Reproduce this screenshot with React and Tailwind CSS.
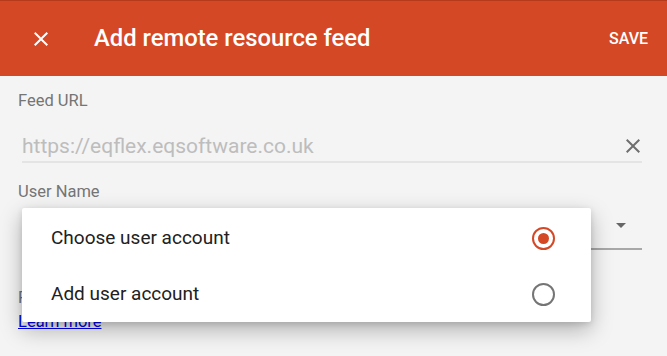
import { useState } from "react";

const accounts = ["Choose user account", "Add user account"];

const CloseIcon = ({ className }) => (
  <svg viewBox="0 0 24 24" className={className} fill="currentColor">
    <path d="M19 6.41 17.59 5 12 10.59 6.41 5 5 6.41 10.59 12 5 17.59 6.41 19 12 13.41 17.59 19 19 17.59 13.41 12z" />
  </svg>
);

const Radio = ({ checked }) => (
  <span
    className={
      checked
        ? "flex items-center justify-center w-[23px] h-[23px] rounded-full border-2 border-[#d44826]"
        : "flex items-center justify-center w-[23px] h-[23px] rounded-full border-2 border-[#757575]"
    }
  >
    {checked && <span className="w-[11px] h-[11px] rounded-full bg-[#d44826]" />}
  </span>
);

export default function App() {
  const [selected, setSelected] = useState(0);

  return (
    <div className="relative w-[667px] h-[356px] overflow-hidden bg-[#f4f4f4] font-['Roboto',sans-serif]">
      {/* header */}
      <div className="flex items-center h-[76px] bg-[#d44826] border-t border-[#b53a1c] text-white">
        <CloseIcon className="ml-[29px] w-[24px] h-[24px]" />
        <h1 className="ml-[41px] text-[23.8px] font-medium">Add remote resource feed</h1>
        <button className="ml-auto mr-[19px] text-[16px] font-medium">SAVE</button>
      </div>

      {/* form */}
      <div className="pl-[18px] pr-[25px]">
        <div className="pt-[15px] text-[16.5px] leading-[20px] text-[#757575]">Feed URL</div>
        <div className="ml-[4px] mt-[23px] flex items-center border-b-2 border-[#e4e4e4] pb-[3px]">
          <span className="flex-1 text-[21px] leading-[24px] text-[#bdbdbd]">https://eqflex.eqsoftware.co.uk</span>
          <CloseIcon className="w-[24px] h-[24px] mr-[-3px] text-[#6f6f6f]" />
        </div>
        <div className="mt-[19px] text-[16.5px] leading-[20px] text-[#757575]">User Name</div>
        <div className="ml-[4px] flex items-center justify-end h-[48px] border-b-2 border-[#a8a8a8]">
          <span className="mr-[16px] w-0 h-0 border-x-[5px] border-x-transparent border-t-[5px] border-t-[#666]" />
        </div>
        <div className="mt-[38px] text-[16.5px] leading-[20px] text-[#757575]">Password</div>
        <a href="#" className="block w-fit mt-[6px] text-[16.5px] leading-[16px] text-[#0000ee] underline">Learn more</a>
      </div>

      {/* account menu */}
      <div className="absolute left-[22px] top-[208px] w-[569px] pt-[2px] bg-white rounded-[2px] shadow-[0_8px_22px_rgba(0,0,0,0.28),0_2px_6px_rgba(0,0,0,0.12)]">
        {accounts.map((label, i) => (
          <button
            key={label}
            onClick={() => setSelected(i)}
            className="flex items-center w-full h-[56px] pl-[29px] pr-[36px] text-left"
          >
            <span className="flex-1 text-[19px] text-[#212121]">{label}</span>
            <Radio checked={selected === i} />
          </button>
        ))}
      </div>
    </div>
  );
}
